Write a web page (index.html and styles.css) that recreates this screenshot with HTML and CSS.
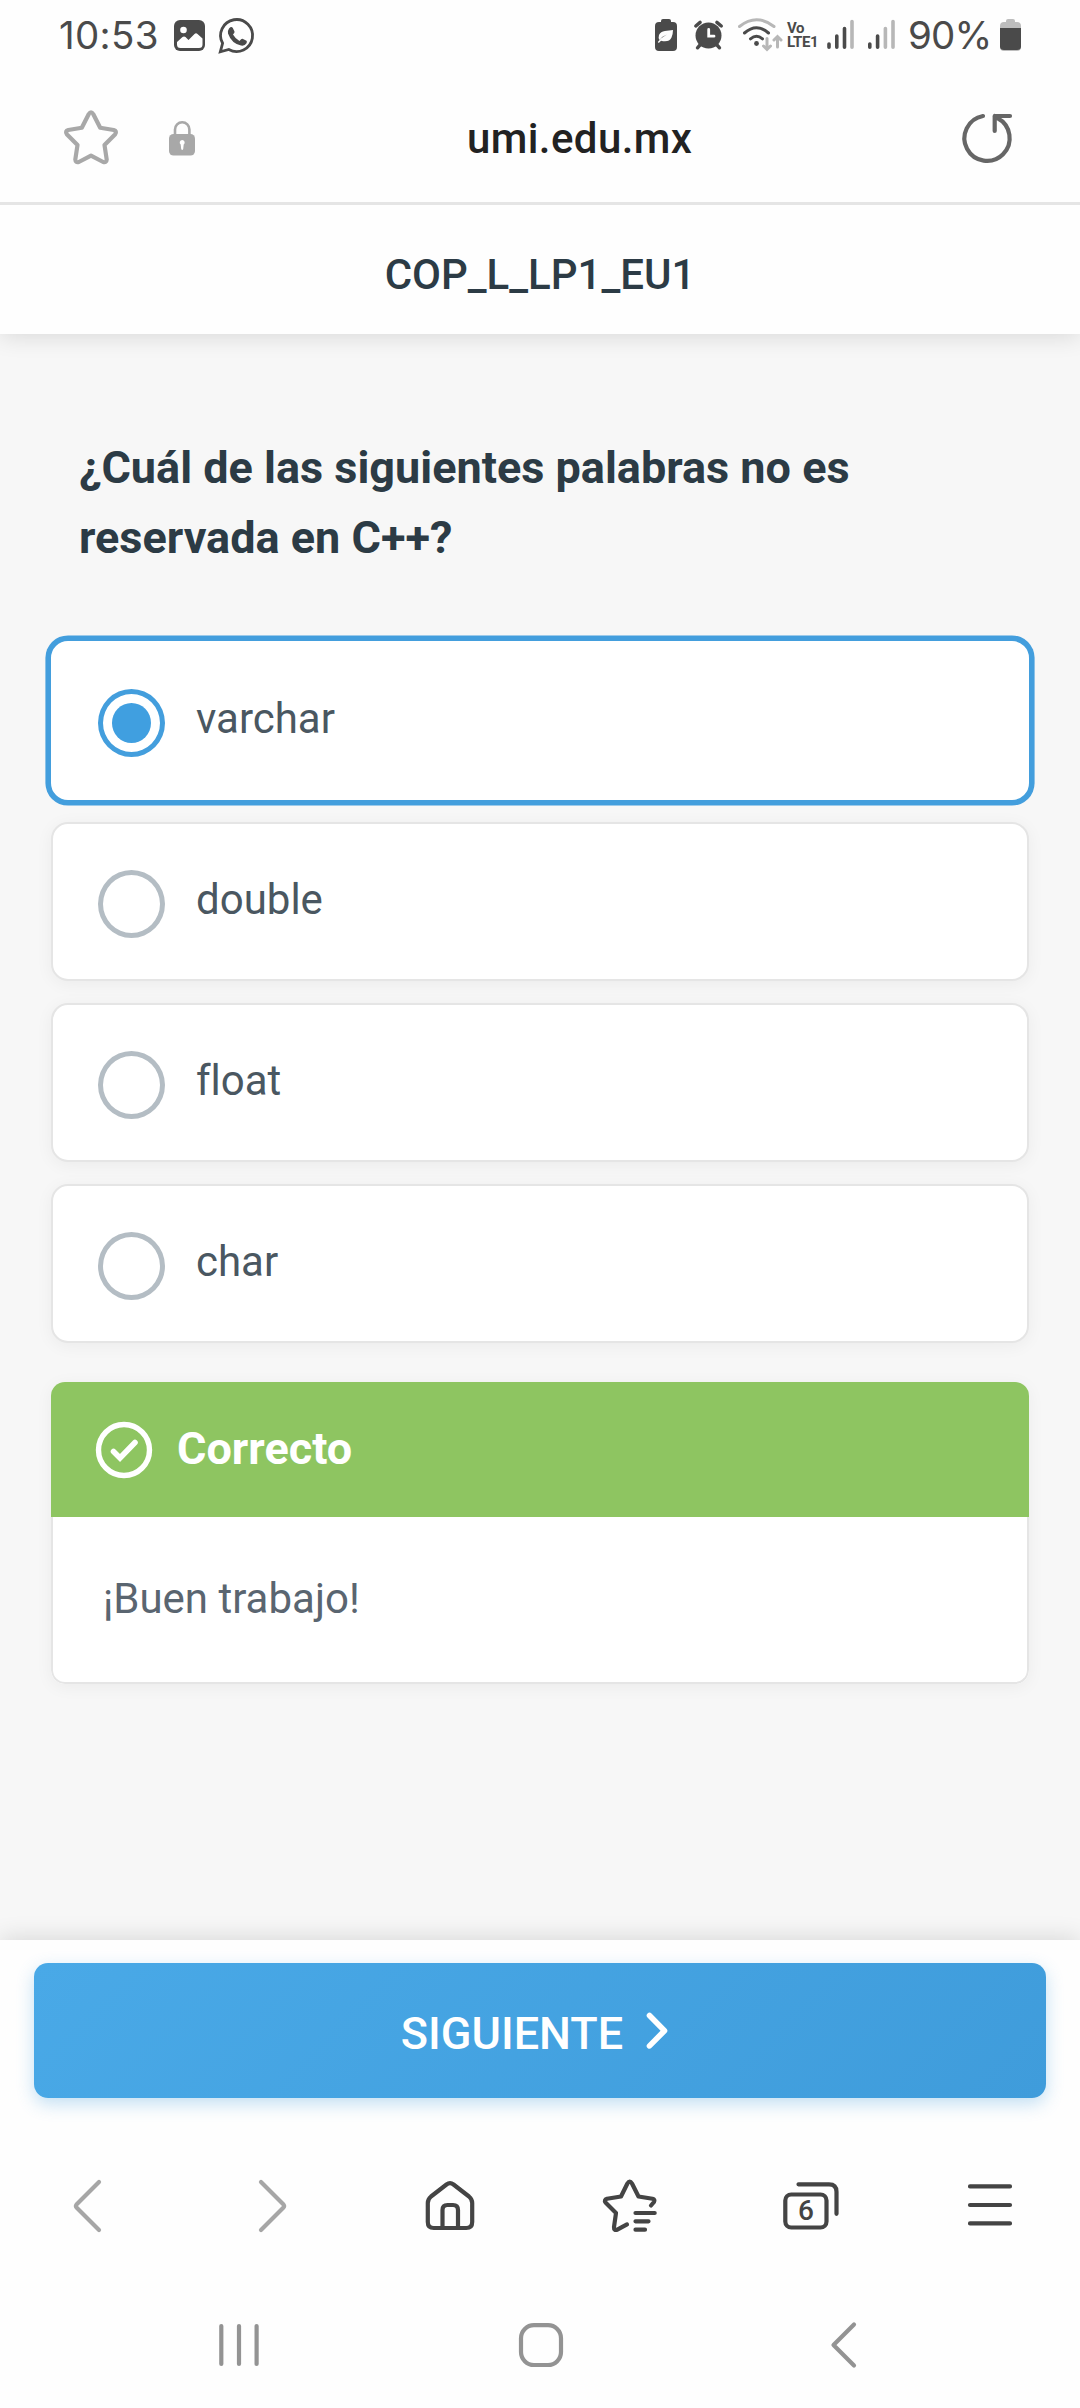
FILE: index.html
```html
<!DOCTYPE html>
<html lang="es">
<head>
<meta charset="utf-8">
<title>COP_L_LP1_EU1</title>
<link rel="stylesheet" href="styles.css">
</head>
<body>
<div class="screen">
  <header class="status">
    <span class="clock">10:53</span>
    <svg class="dark" width="36" height="74" viewBox="172 0 36 74"><rect x="174" y="20" width="31" height="31" rx="6"/><circle cx="183.500" cy="30" r="3.300" fill="#fefefe"/><path fill="#fefefe" d="M177 42l5.500-5q1.500-1.200 3 0l3 3 6-6q1.500-1.500 3 0l5 4.500v6q0 3.500-3.500 3.500h-18.500q-3.500 0-3.500-3.500z"/></svg>
    <svg class="wa" width="42" height="74" viewBox="216 0 42 74"><path d="M220.300 51.800l2.300-8.500a16 16 0 1 1 6.200 6.200z" fill="none" stroke="#4a4a4a" stroke-width="2.800"/><path class="dark" d="M229 28.500q2.500-2.500 3.800-.5l1.700 3.500q.5 1-1.500 3 2.500 4.500 6.500 6.500 2-2.500 3-2.200l4 2q.8.500 0 2.500-1.700 3-5.500 2.300-9.500-2-13-12-.5-3 1-5.100z"/></svg>
    <span class="spacer"></span>
    <svg class="dark" width="32" height="74" viewBox="650 0 32 74"><path d="M661 22v-1q0-2 2-2h6q2 0 2 2v1h2q4 0 4 4v21q0 4-4 4h-14q-4 0-4-4v-21q0-4 4-4z"/><path fill="#fefefe" d="M673 30c-5 1-12 0-14 5q-1 3 .5 5 3-4 7.500-5.500-6 3-9.200 7.500l1 1 2.200-2.200q8 2 10.500-3.300 1.500-3.500 1.500-7.500z"/></svg>
    <svg class="dark alarm" width="34" height="74" viewBox="692 0 34 74"><circle cx="708.500" cy="35.500" r="13"/><path d="M695.800 26l4.300-3.600M721.300 26l-4.400-3.600M700 45l-2.500 2.800M717 45l2.500 2.800" stroke="#4a4a4a" stroke-width="3.400" stroke-linecap="round"/><path d="M708.700 29.500v6.700h5.300" fill="none" stroke="#fefefe" stroke-width="2.800" stroke-linecap="round"/></svg>
    <svg class="wifi" width="48" height="74" viewBox="736 0 48 74" fill="none" stroke-linecap="round" stroke-width="3"><path stroke="#b7b7b7" d="M739.500 26.500q17-13.500 34.500 0"/><path stroke="#4a4a4a" d="M744.500 33q12-10.500 24 0M750.500 38.800q6-5 12 0"/><circle cx="756.500" cy="43.500" r="2.400" fill="#4a4a4a"/><path stroke="#b7b7b7" d="M767 38.500v10.500M763.500 46l3.500 3.500 3.500-3.500M777.500 47v-10.500M774 40l3.500-3.500 3.500 3.500"/></svg>
    <span class="volte"><span>Vo</span><span>LTE1</span></span>
    <svg class="bars" width="72" height="74" viewBox="824 0 72 74" fill="none" stroke-width="3.600" stroke-linecap="round"><path stroke="#4a4a4a" d="M829 44v3.300M836.800 36v11.300M844.500 28.500v18.800M869.800 44v3.300M877.600 36v11.300"/><path stroke="#b7b7b7" d="M852 21.500v25.800M885.400 28.500v18.800M893 21.500v25.800"/></svg>
    <span class="percent">90%</span>
    <svg width="25" height="74" viewBox="998 0 25 74"><path fill="#bdbdbd" d="M1006 22v-1q0-2 2-2h5q2 0 2 2v1h2q4 0 4 4v21q0 4-4 4h-13q-4 0-4-4v-21q0-4 4-4z"/><path class="dark" d="M1000 28h21v18.500q0 3.500-4 3.500h-13q-4 0-4-3.500z"/></svg>
  </header>

  <nav class="address">
    <div class="address-left">
      <svg width="62" height="62" viewBox="60 107 62 62"><path d="M88.800 114q2.200-3.500 4.400 0l7 13.800 13.500 2.200q3.500 1 1.500 4.200l-10.700 10.800 2.200 14.500q-.3 3.500-3.500 2.500l-12.200-6.300-12.200 6.300q-3.300 1-3.500-2.500l2.200-14.500-10.700-10.800q-2-3.200 1.500-4.200l13.500-2.200z" fill="none" stroke="#a8a8a8" stroke-width="4.200" stroke-linejoin="round"/></svg>
      <svg width="32" height="40" viewBox="166 118 32 40"><path d="M175 135v-5.500a7.200 7.200 0 0 1 14.400 0v5.500" fill="none" stroke="#a8a8a8" stroke-width="2.600"/><rect x="169" y="134" width="26" height="21.500" rx="4.500" fill="#a8a8a8"/><path fill="#fefefe" d="M182.200 140a2.500 2.500 0 0 1 1.500 4.500l-.5 4.500q-1 2-2 0l-.5-4.500a2.500 2.500 0 0 1 1.500-4.500z"/></svg>
    </div>
    <span class="url">umi.edu.mx</span>
    <svg class="reload" width="60" height="60" viewBox="959 108 60 60" fill="none" stroke="#666" stroke-width="4.200" stroke-linecap="round" stroke-linejoin="round"><path d="M983 116a22.600 22.600 0 1 0 14.500 2.200l-2.800-2.200M1010 116h-15.300v15"/></svg>
  </nav>

  <div class="quiz-title">COP_L_LP1_EU1</div>

  <main class="quiz">
    <h1 class="question">¿Cuál de las siguientes palabras no es<br>reservada en C++?</h1>
    <div class="options">
      <label class="option selected"><span class="radio"></span><span class="option-text">varchar</span></label>
      <label class="option"><span class="radio"></span><span class="option-text">double</span></label>
      <label class="option"><span class="radio"></span><span class="option-text">float</span></label>
      <label class="option"><span class="radio"></span><span class="option-text">char</span></label>
    </div>
    <section class="feedback">
      <div class="feedback-head">
        <svg width="58" height="58" viewBox="0 0 58 58" fill="none" stroke="#fff" stroke-linecap="round"><circle cx="29" cy="29" r="25.500" stroke-width="5.400"/><path stroke-width="5.600" d="M18.500 30.500l6.500 6.500 15-15.500"/></svg>
        <span>Correcto</span>
      </div>
      <div class="feedback-body">¡Buen trabajo!</div>
    </section>
  </main>

  <footer class="actions">
    <button class="next"><span>SIGUIENTE</span><svg width="22" height="40" viewBox="0 0 22 40"><path d="M3.500 4.500l15 15.200-15 15.200" fill="none" stroke="#fff" stroke-width="5.600" stroke-linecap="round" stroke-linejoin="round"/></svg></button>
  </footer>

  <nav class="toolbar">
    <svg class="muted" viewBox="60 2176 60 60"><path d="M99 2182l-22.500 22.500q-1.200 1.500 0 3l22.500 22.500"/></svg>
    <svg class="muted" viewBox="240 2176 60 60"><path d="M261 2182l22.500 22.500q1.200 1.500 0 3l-22.500 22.500"/></svg>
    <svg viewBox="420 2176 60 60"><path d="M446.500 2184.500q3.500-2.800 7 0l15.500 12q3.200 2.700 3.200 6.500v19q0 6-6 6h-32.400q-6 0-6-6v-19q0-3.800 3.200-6.500zM442.500 2228v-18q0-5 5-5h5.500q5 0 5 5v18"/></svg>
    <svg viewBox="600 2176 60 60"><path d="M651 2205.500l3-3.500q1.300-2.500-1.500-3.200l-14-2.300-6.500-13q-2.300-3.800-4.600 0l-6.400 13-14 2.300q-3.200 1-1.500 3.700l10.500 10.500-2 14q-.2 3.700 3.300 2.700l9.700-5.300M635.500 2213h19.200M635.500 2221.300h13M635.500 2229.700h9.500"/></svg>
    <div class="tabs"><svg viewBox="780 2176 60 60"><path d="M798.500 2184.300h30.500q7.500 0 7.500 7.500v22"/><rect x="785.300" y="2194.500" width="41.200" height="33" rx="6"/></svg><span>6</span></div>
    <svg viewBox="960 2176 60 60"><path d="M970 2186.400h40M970 2205h40M970 2223.400h40"/></svg>
  </nav>

  <nav class="system">
    <svg viewBox="209 2315 60 60"><path d="M221.300 2326v38M239 2326v38M256.600 2326v38"/></svg>
    <svg viewBox="511 2315 60 60"><rect x="521" y="2325.200" width="40" height="39.800" rx="13"/></svg>
    <svg viewBox="813 2315 60 60"><path d="M854 2324.500l-20.500 20.500 20.500 20.500"/></svg>
  </nav>
</div>
</body>
</html>
```
FILE: styles.css
```css
* { box-sizing: border-box; }

body {
  margin: 0;
  background: #fefefe;
  font-family: Roboto, "Liberation Sans", sans-serif;
}

svg { display: block; flex: none; }

.screen {
  display: flex;
  flex-direction: column;
  width: 1080px;
  height: 2408px;
  overflow: hidden;
}

/* phone status bar */
.status {
  display: flex;
  flex: none;
  height: 74px;
  padding-left: 58px;
  color: #4a4a4a;
  line-height: 70px;
  white-space: nowrap;
}
.dark { fill: #4a4a4a; }
.clock, .percent {
  flex: none;
  font-family: Inter, Roboto, sans-serif;
  font-size: 38.5px;
  font-weight: 400;
}
.clock { width: 114px; padding-left: 1px; letter-spacing: .3px; }
.wa { margin-left: 8px; }
.spacer { flex: none; width: 392px; }
.alarm { margin-left: 10px; }
.wifi { margin-left: 10px; }
.volte {
  display: flex;
  flex-direction: column;
  flex: none;
  width: 37px;
  padding: 21px 0 0 3px;
  font-size: 15px;
  font-weight: 700;
  line-height: 14px;
  letter-spacing: -.4px;
}
.bars { margin-left: 3px; }
.percent { width: 90px; margin-left: 12px; letter-spacing: -.8px; }

/* browser address bar */
.address {
  display: grid;
  grid-template-columns: 410px auto 1fr;
  align-items: center;
  position: relative;
  z-index: 1;
  flex: none;
  height: 131px;
  padding: 0 61px 0 60px;
  border-bottom: 3px solid #e5e5e5;
  background: #fefefe;
}
.address-left { display: flex; align-items: center; gap: 44px; }
.url { margin-left: -3px; color: #222; font-size: 42px; font-weight: 500; letter-spacing: .4px; }
.reload { justify-self: end; }

.quiz-title {
  position: relative;
  flex: none;
  height: 129px;
  padding-top: 10px;
  background: #fefefe;
  box-shadow: 0 3px 22px rgba(0, 0, 0, .12);
  color: #2c3b45;
  font-size: 42px;
  font-weight: 500;
  line-height: 119px;
  text-align: center;
}

/* quiz */
.quiz {
  flex: none;
  height: 1606px;
  padding: 99px 51px 0;
  background: #f7f7f7;
}
.question {
  margin: 0 28px 68px;
  color: #2c3b45;
  font-size: 45px;
  font-weight: 700;
  line-height: 70px;
  white-space: nowrap;
}
.options { display: flex; flex-direction: column; gap: 22px; }
.option {
  display: flex;
  align-items: center;
  gap: 31px;
  height: 159px;
  padding-left: 45px;
  border: 2px solid #e5e5e5;
  border-radius: 17px;
  background: #fff;
  box-shadow: 0 3px 17px rgba(0, 0, 0, .05);
  color: #4a5761;
  font-size: 42px;
  font-variant-ligatures: none;
}
.option.selected { border-color: #fff; box-shadow: 0 0 0 5.6px #439edd; }
.radio {
  width: 67px;
  height: 68px;
  margin-top: 5px;
  padding: 9px;
  border: 5.6px solid #b4bdc4;
  border-radius: 50%;
}
.selected .radio {
  border-color: #439edd;
  background: #409fe0 content-box;
}
.option-text { margin-top: -4px; }

.feedback {
  height: 302px;
  margin-top: 39px;
  border-radius: 14px;
  background: #fff;
  box-shadow: 0 3px 17px rgba(0, 0, 0, .05);
  overflow: hidden;
}
.feedback-head {
  display: flex;
  align-items: center;
  gap: 24px;
  height: 135px;
  padding-left: 44px;
  background: #8ec561;
  color: #fff;
  font-size: 45px;
  font-weight: 700;
  line-height: 60px;
}
.feedback-head span { margin-top: -1px; }
.feedback-body {
  height: 167px;
  padding-left: 50px;
  border: 2px solid #e5e5e5;
  border-top: 0;
  border-radius: 0 0 14px 14px;
  color: #5a6570;
  font-size: 42px;
  line-height: 163px;
}

/* next button */
.actions {
  position: relative;
  flex: none;
  height: 183px;
  padding: 23px 34px 0;
  background: #fefefe;
  box-shadow: 0 -3px 22px rgba(0, 0, 0, .12);
}
.next {
  display: flex;
  align-items: center;
  justify-content: center;
  gap: 23px;
  width: 100%;
  height: 135px;
  padding: 0 11px 0 0;
  border: 0;
  border-radius: 14px;
  background: linear-gradient(135deg, #49a9e7, #3f9cdb);
  box-shadow: 0 6px 17px rgba(67, 160, 222, .32);
  color: #fff;
  font: 500 45px/60px Roboto, "Liberation Sans", sans-serif;
}
.next span { padding-top: 6px; }

/* browser toolbar and system keys */
.toolbar, .system {
  display: grid;
  justify-items: center;
  align-items: center;
  position: relative;
  flex: none;
  background: #fefefe;
}
.toolbar { grid-template-columns: repeat(6, 1fr); height: 166px; }
.toolbar svg, .system svg {
  width: 60px;
  height: 60px;
  fill: none;
  stroke: #444;
  stroke-width: 4.200;
  stroke-linecap: round;
  stroke-linejoin: round;
}
.toolbar .muted { stroke: #a6a6a6; }
.tabs { position: relative; }
.tabs span {
  position: absolute;
  left: 5px;
  top: 20px;
  width: 42px;
  color: #444;
  font-size: 28px;
  font-weight: 500;
  line-height: 30px;
  text-align: center;
}
.system { grid-template-columns: repeat(3, 302px); height: 112px; padding-left: 88px; }
.system svg { stroke: #939393; }
```
